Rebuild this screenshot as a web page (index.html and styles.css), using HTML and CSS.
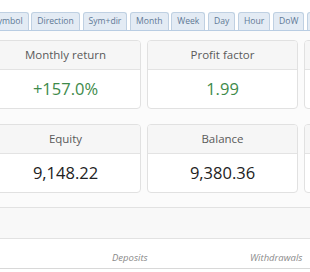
FILE: index.html
```html
<!DOCTYPE html>
<html>
<head>
<meta charset="utf-8">
<link rel="stylesheet" href="styles.css">
</head>
<body>
<div class="page">
  <div class="tabbar">
    <ul class="tabs">
      <li class="tab">Symbol</li>
      <li class="tab">Direction</li>
      <li class="tab">Sym+dir</li>
      <li class="tab">Month</li>
      <li class="tab">Week</li>
      <li class="tab">Day</li>
      <li class="tab">Hour</li>
      <li class="tab">DoW</li>
      <li class="tab tab-more"></li>
    </ul>
  </div>
  <div class="content">
    <div class="cards">
      <div class="card"><div class="card-head">Monthly return</div><div class="card-val pos">+157.0%</div></div>
      <div class="card"><div class="card-head">Profit factor</div><div class="card-val pos">1.99</div></div>
      <div class="card"><div class="card-head"></div><div class="card-val"></div></div>
    </div>
    <div class="cards">
      <div class="card"><div class="card-head">Equity</div><div class="card-val">9,148.22</div></div>
      <div class="card"><div class="card-head">Balance</div><div class="card-val">9,380.36</div></div>
      <div class="card"><div class="card-head"></div><div class="card-val"></div></div>
    </div>
    <div class="panel"></div>
    <div class="legend">
      <span class="leg leg-dep">Deposits</span>
      <span class="leg leg-wd">Withdrawals</span>
    </div>
  </div>
</div>
</body>
</html>
```
FILE: styles.css
```css
html, body {
  margin: 0;
  padding: 0;
  background: #ffffff;
  font-family: "Open Sans", "DejaVu Sans", sans-serif;
  overflow: hidden;
}
.page {
  width: 310px;
  height: 272px;
  overflow: hidden;
}
.tabbar {
  padding-top: 12px;
  border-bottom: 1px solid #b9cde3;
  height: 18px;
  margin-left: -13px;
}
.tabs {
  list-style: none;
  margin: 0;
  padding: 0;
  display: flex;
  gap: 2.7px;
  white-space: nowrap;
}
.tab {
  box-sizing: border-box;
  padding: 0 5px;
  border: 1px solid #bfd0e2;
  border-bottom: none;
  border-radius: 3px 3px 0 0;
  background: #e3ebf4;
  color: #5e7894;
  font-size: 8.6px;
  line-height: 17px;
  height: 18px;
}
.tab-more {
  width: 30px;
}
.content {
  background: #fbfbfb;
  padding-top: 9px;
  margin-left: -10px;
  width: 480px;
}
.cards {
  display: grid;
  grid-template-columns: repeat(3, 151px);
  column-gap: 6px;
  margin-bottom: 15px;
}
.card {
  border: 1px solid #e1e1e1;
  border-radius: 4px;
  background: #fff;
  overflow: hidden;
}
.card-head {
  height: 28px;
  line-height: 27px;
  background: #f6f6f6;
  border-bottom: 1px solid #e3e3e3;
  text-align: center;
  font-size: 11.5px;
  color: #5a5a5a;
}
.card-val {
  height: 38px;
  line-height: 38px;
  text-align: center;
  font-size: 16.5px;
  color: #222;
}
.card-val.pos {
  color: #3e8a4a;
}
.panel {
  height: 30px;
  margin-top: -1px;
  background: #f8f8f8;
  border-top: 1px solid #e2e2e2;
  border-bottom: 1px solid #e2e2e2;
}
.legend {
  background: #fff;
  height: 29px;
  border-bottom: 1px solid #d8d8d8;
  position: relative;
  font-size: 9.5px;
  font-style: italic;
  color: #8a8a8a;
}
.leg {
  position: absolute;
  top: 12px;
}
.leg-dep { left: 122px; }
.leg-wd { left: 260px; }
```
